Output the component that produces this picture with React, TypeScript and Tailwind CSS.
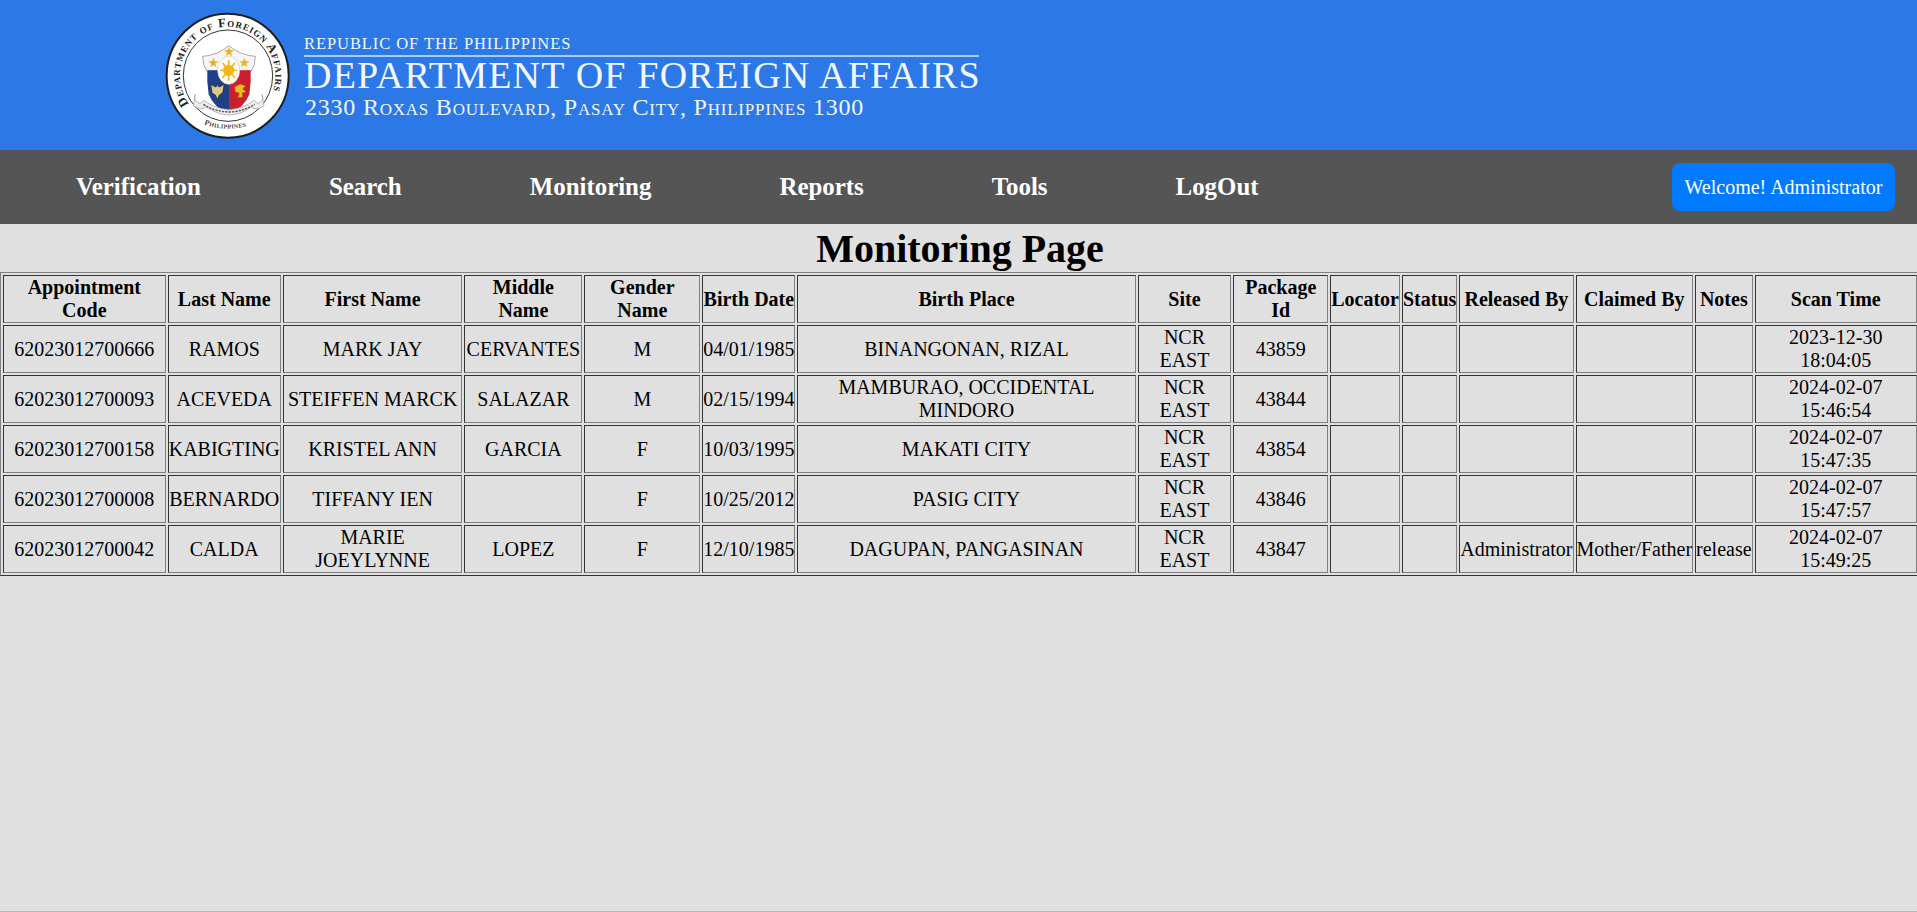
const serif = { fontFamily: '"Liberation Serif", serif' };

const COLUMNS = [
  'Appointment Code', 'Last Name', 'First Name', 'Middle Name', 'Gender Name', 'Birth Date', 'Birth Place',
  'Site', 'Package Id', 'Locator', 'Status', 'Released By', 'Claimed By', 'Notes', 'Scan Time',
];

const ROWS = [
  ['62023012700666', 'RAMOS', 'MARK JAY', 'CERVANTES', 'M', '04/01/1985', 'BINANGONAN, RIZAL', 'NCR EAST', '43859', '', '', '', '', '', '2023-12-30 18:04:05'],
  ['62023012700093', 'ACEVEDA', 'STEIFFEN MARCK', 'SALAZAR', 'M', '02/15/1994', 'MAMBURAO, OCCIDENTAL MINDORO', 'NCR EAST', '43844', '', '', '', '', '', '2024-02-07 15:46:54'],
  ['62023012700158', 'KABIGTING', 'KRISTEL ANN', 'GARCIA', 'F', '10/03/1995', 'MAKATI CITY', 'NCR EAST', '43854', '', '', '', '', '', '2024-02-07 15:47:35'],
  ['62023012700008', 'BERNARDO', 'TIFFANY IEN', '', 'F', '10/25/2012', 'PASIG CITY', 'NCR EAST', '43846', '', '', '', '', '', '2024-02-07 15:47:57'],
  ['62023012700042', 'CALDA', 'MARIE JOEYLYNNE', 'LOPEZ', 'F', '12/10/1985', 'DAGUPAN, PANGASINAN', 'NCR EAST', '43847', '', '', 'Administrator', 'Mother/Father', 'release', '2024-02-07 15:49:25'],
];

const NAV = ['Verification', 'Search', 'Monitoring', 'Reports', 'Tools', 'LogOut'];

const STAR = 'l4 11h11l-9 7 3.5 11-9.5-7-9.5 7 3.5-11-9-7h11z';

function Seal() {
  return (
    <svg width="125" height="127" viewBox="25 15 375 381" className="shrink-0">
      <defs>
        <path id="seal-top" d="M 97 291 A 143 146 0 1 1 329 291" />
        <path id="seal-bottom" d="M 140 352 Q 215 378 290 352" />
      </defs>
      <ellipse cx="213" cy="206" rx="183" ry="186" fill="#fff" stroke="#1d1d1d" strokeWidth="6" />
      <ellipse cx="214" cy="206" rx="134" ry="137" fill="#fff" stroke="#333" strokeWidth="3" />
      <text fontSize="38" fontWeight="700" fill="#222" letterSpacing="2.6" style={{ ...serif, fontVariant: 'small-caps' }}>
        <textPath href="#seal-top">Department of Foreign Affairs</textPath>
      </text>
      <text fontSize="24" fontWeight="700" fill="#444" style={{ ...serif, fontVariant: 'small-caps' }} letterSpacing="1">
        <textPath href="#seal-bottom" startOffset="2">Philippines</textPath>
      </text>
      {/* shield frame */}
      <path d="M138 148 Q180 146 216 116 Q254 146 296 148 Q296 175 284 192 H150 Q138 175 138 148 Z" fill="#f5f5f5" stroke="#aaa" strokeWidth="3" />
      <path d="M152 190 H217 V322 Q170 300 156 262 Q150 225 152 190 Z" fill="#1f3f86" />
      <path d="M217 190 H282 Q284 225 278 262 Q264 300 217 322 Z" fill="#c9202f" />
      <ellipse cx="216" cy="190" rx="33" ry="42" fill="#fff" stroke="#c8c8c8" strokeWidth="2" />
      <circle cx="216" cy="190" r="17" fill="#f3b71d" />
      <path d="M216 158V222M190 190H242M197 167L235 213M235 167L197 213" stroke="#f3b71d" strokeWidth="5" />
      <path d={`M217 119${STAR}`} fill="#e8b320" />
      <path d={`M170 152${STAR}`} fill="#e8b320" />
      <path d={`M263 152${STAR}`} fill="#e8b320" />
      {/* eagle and lion */}
      <path d="M162 232 L178 240 L182 232 L187 240 L203 232 L198 258 L188 264 L182 278 L176 264 L166 258 Z" fill="#d9c98c" stroke="#2c2c22" strokeWidth="2.5" />
      <path d="M234 240 L250 232 L266 236 L258 246 L268 254 L256 258 L258 270 L244 272 L248 258 L236 254 Z" fill="#f2b81f" stroke="#b07a10" strokeWidth="1.5" />
      {/* scroll */}
      <path d="M116 262 Q108 282 130 290 L142 280 Q170 304 217 308 Q264 304 292 280 L304 290 Q324 282 316 262 L322 296 Q300 312 284 300 Q250 324 217 324 Q184 324 150 300 Q134 312 110 296 Z" fill="#eee" stroke="#999" strokeWidth="2" />
      <path d="M140 292 Q175 314 217 315 Q259 314 294 292" fill="none" stroke="#555" strokeWidth="4" strokeDasharray="7 3" />
    </svg>
  );
}

export default function App() {
  return (
    <div className="min-h-[912px] bg-[#e0e0e0] text-black border-b border-[#b9b5c6] overflow-hidden" style={serif}>
      <div className="w-[1920px]">
        <header className="h-[150px] bg-[#2b78e6] flex items-start pl-[165px] pt-[12px]">
          <Seal />
          <div className="ml-[14px] mt-[21px] w-[675px] text-[#f2f7fe]">
            <div className="text-[16.5px] leading-[20px] tracking-[0.93px] pt-[1px] pb-[1px] whitespace-nowrap">REPUBLIC OF THE PHILIPPINES</div>
            <div className="border-t-2 border-[#a9cdf5] text-[38px] leading-[36px] tracking-[1.2px] whitespace-nowrap">DEPARTMENT OF FOREIGN AFFAIRS</div>
            <div className="text-[24px] leading-[28px] tracking-[0.78px] pl-px [font-variant:small-caps] whitespace-nowrap">2330 Roxas Boulevard, Pasay City, Philippines 1300</div>
          </div>
        </header>
        <nav className="h-[74px] bg-[#555] flex items-center justify-between pl-[12px] pr-[25px]">
          <ul className="flex">
            {NAV.map(item => (
              <li key={item} className="px-[64px] text-[24.9px] font-bold text-white">{item}</li>
            ))}
          </ul>
          <div className="h-[48px] w-[223px] rounded-[8px] bg-[#007bff] text-white text-[20px] flex items-center justify-center">Welcome! Administrator</div>
        </nav>
        <h1 className="text-[40px] font-bold text-center leading-[48px] pt-px mb-[-1px]">Monitoring Page</h1>
        <table className="w-full border-separate border-spacing-[2px] border border-t-[#808080] border-l-[#808080] border-r-[#333] border-b-[#333] text-center text-[20px] leading-[23px]">
          <thead>
            <tr>
              {COLUMNS.map(col => (
                <th key={col} className="border border-t-[#333] border-l-[#333] border-r-[#808080] border-b-[#808080] p-0 font-bold h-[48px]">{col}</th>
              ))}
            </tr>
          </thead>
          <tbody>
            {ROWS.map(row => (
              <tr key={row[0]}>
                {row.map((cell, i) => (
                  <td key={i} className="border border-t-[#333] border-l-[#333] border-r-[#808080] border-b-[#808080] p-0 h-[48px]">{cell}</td>
                ))}
              </tr>
            ))}
          </tbody>
        </table>
      </div>
    </div>
  );
}
